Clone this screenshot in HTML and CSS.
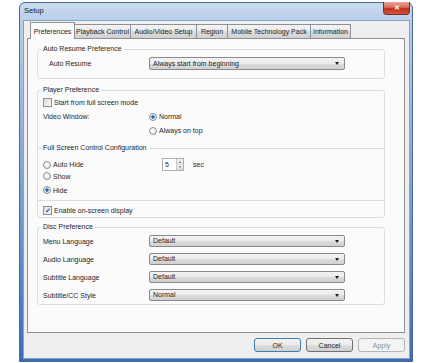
FILE: index.html
```html
<!DOCTYPE html>
<html>
<head>
    <meta charset="UTF-8">
    <title>Setup</title>
    <link rel="stylesheet" href="styles.css">
</head>
<body>
    <div class="window">
        <div class="titlebar">
            <span class="title">Setup</span>
            <span class="close-btn">&#x2715;</span>
        </div>

        <div class="client">
            <div class="tabs">
                <div class="tab active tab-prefs">Preferences</div>
                <div class="tab tab-playback">Playback Control</div>
                <div class="tab tab-av">Audio/Video Setup</div>
                <div class="tab tab-region">Region</div>
                <div class="tab tab-mobile">Mobile Technology Pack</div>
                <div class="tab tab-info">Information</div>
            </div>

            <div class="panel">
                <!-- Auto resume -->
                <fieldset class="group group-auto">
                    <legend>Auto Resume Preference</legend>
                    <div class="row">
                        <span class="label indent">Auto Resume</span>
                        <div class="select tall">Always start from beginning<span class="arrow"></span></div>
                    </div>
                </fieldset>

                <!-- Player -->
                <fieldset class="group group-player">
                    <legend>Player Preference</legend>
                    <div class="check"><span class="box"></span>Start from full screen mode</div>
                    <div class="row video-row">
                        <span class="label">Video Window:</span>
                        <div class="options">
                            <div class="radio"><span class="dot checked"></span>Normal</div>
                            <div class="radio"><span class="dot"></span>Always on top</div>
                        </div>
                    </div>

                    <fieldset class="subgroup">
                        <legend>Full Screen Control Configuration</legend>
                        <div class="row spin-row">
                            <div class="radio wide"><span class="dot"></span>Auto Hide</div>
                            <div class="spin">
                                <span class="spin-value">5</span>
                                <span class="spin-buttons">
                                    <span class="spin-up"></span>
                                    <span class="spin-down"></span>
                                </span>
                            </div>
                            <span class="unit">sec</span>
                        </div>
                        <div class="radio">
                            <span class="dot"></span>Show
                        </div>
                        <div class="radio hide-row"><span class="dot checked"></span>Hide</div>
                    </fieldset>

                    <div class="check osd"><span class="box checked">&#x2714;</span>Enable on-screen display</div>
                </fieldset>

                <!-- Disc -->
                <fieldset class="group group-disc">
                    <legend>Disc Preference</legend>
                    <div class="row">
                        <span class="label">Menu Language</span>
                        <div class="select">Default<span class="arrow"></span></div>
                    </div>
                    <div class="row">
                        <span class="label">Audio Language</span>
                        <div class="select">Default<span class="arrow"></span></div>
                    </div>
                    <div class="row">
                        <span class="label">Subtitle Language</span>
                        <div class="select">Default<span class="arrow"></span></div>
                    </div>
                    <div class="row">
                        <span class="label">Subtitle/CC Style</span>
                        <div class="select">Normal<span class="arrow"></span></div>
                    </div>
                </fieldset>
            </div>

            <div class="actions">
                <button class="btn default">OK</button>
                <button class="btn">Cancel</button>
                <button class="btn disabled">Apply</button>
            </div>
        </div>
    </div>
</body>
</html>
```

FILE: styles.css
```css
/* base */
* {
    box-sizing: border-box;
}

body {
    margin: 0;
    background: #ffffff;
    font-family: "Liberation Sans", Arial, sans-serif;
    font-size: 7px;
    color: #1e1e1e;
}

/* window frame */
.window {
    width: 394px;
    height: 360px;
    margin: 2px 0 0 19px;
    padding: 0 2px 2px 3px;
    border: 1px solid #4a6a96;
    border-radius: 6px 6px 0 0;
    background: linear-gradient(180deg, #c9dbf0 0, #b8cfea 18px, #a7c3e4 60px, #6f98cf 220px, #3a6cb6 100%);
    display: flex;
    flex-direction: column;
}

.titlebar {
    height: 17px;
    display: flex;
    align-items: flex-start;
}

.title {
    padding: 3px 0 0 1px;
    font-size: 7.5px;
    line-height: 10px;
    color: #1a1a1a;
}

.close-btn {
    margin: -1px 0 0 auto;
    width: 27px;
    height: 13px;
    border: 1px solid #7b2f24;
    border-top: none;
    border-radius: 0 0 4px 4px;
    background: linear-gradient(180deg, #e7a698 0, #d46a55 45%, #c0301c 55%, #d2553c 100%);
    color: #ffffff;
    font-size: 7px;
    font-weight: bold;
    line-height: 12px;
    text-align: center;
}

/* client area */
.client {
    flex: 1;
    border: 1px solid #8aa2c2;
    background: #efefef;
    display: flex;
    flex-direction: column;
}

/* tabs */
.tabs {
    height: 17px;
    padding-left: 6px;
    display: flex;
    align-items: flex-end;
}

.tab {
    height: 14px;
    border: 1px solid #8d9096;
    border-bottom: none;
    border-left: none;
    background: linear-gradient(180deg, #f4f4f4 0, #e9e9e9 50%, #dcdcdc 50%, #d2d2d2 100%);
    line-height: 13px;
    white-space: nowrap;
    text-align: center;
    flex-shrink: 0;
}

.tab.active {
    height: 17px;
    margin-bottom: -1px;
    border-left: 1px solid #8d9096;
    background: #fbfbfb;
    line-height: 17px;
    position: relative;
    z-index: 1;
}

.tab-prefs { width: 45px; }
.tab-playback { width: 56px; }
.tab-av { width: 66px; }
.tab-region { width: 31px; }
.tab-mobile { width: 83px; }
.tab-info { width: 40px; }

.panel {
    height: 295px;
    margin: 0 4px 0 3px;
    border: 1px solid #8d9096;
    background: #fbfbfb;
    padding-top: 5px;
}

/* group boxes */
.group {
    margin: 0 19px 0 9px;
    padding: 3px 5px 2px 5px;
    border: 1px solid #d5dfe5;
    border-radius: 3px;
    min-width: 0;
}

.group legend,
.subgroup legend {
    padding: 0 2px;
    margin-left: -2px;
    line-height: 10px;
}

.group-auto {
    padding-bottom: 8px;
}

.group-player {
    margin-top: 6px;
    padding-top: 2px;
}

.group-disc {
    margin-top: 4px;
    padding-bottom: 3px;
}

.subgroup {
    margin: 7px -5px 0 -5px;
    padding: 5px 5px 5px 5px;
    border: none;
    border-top: 1px solid #d5dfe5;
    border-bottom: 1px solid #d5dfe5;
    min-width: 0;
}

/* rows */
.row {
    display: flex;
    align-items: center;
}

.group-disc .row + .row {
    margin-top: 6px;
}

.label {
    width: 106px;
    flex-shrink: 0;
}

.label.indent {
    padding-left: 6px;
}

.video-row {
    align-items: flex-start;
    margin-top: 5px;
    line-height: 10px;
}

.options {
    display: flex;
    flex-direction: column;
    gap: 4px;
}

/* dropdown */
.select {
    width: 196px;
    height: 12px;
    padding: 0 5px 0 3px;
    border: 1px solid #8a8a8a;
    border-radius: 2px;
    background: linear-gradient(180deg, #f3f3f3 0, #ebebeb 50%, #dddddd 50%, #d0d0d0 100%);
    display: flex;
    align-items: center;
    justify-content: space-between;
    line-height: 10px;
}

.select.tall {
    height: 13px;
}

.arrow {
    width: 0;
    height: 0;
    border-left: 2.5px solid transparent;
    border-right: 2.5px solid transparent;
    border-top: 3px solid #1a1a1a;
}

/* check boxes */
.check {
    display: flex;
    align-items: center;
    height: 10px;
}

.box {
    width: 9px;
    height: 9px;
    margin-right: 2px;
    border: 1px solid #8e8f8f;
    background: linear-gradient(135deg, #dcdcdc 0, #f6f6f6 100%);
    font-size: 7px;
    line-height: 7px;
    text-align: center;
    color: #2a5db0;
}

.osd {
    margin-top: 4px;
}

/* radios */
.radio {
    display: flex;
    align-items: center;
    height: 10px;
}

.radio.wide {
    width: 119px;
    flex-shrink: 0;
}

.dot {
    width: 8px;
    height: 8px;
    margin-right: 2px;
    border: 1px solid #8e8f8f;
    border-radius: 50%;
    background: radial-gradient(circle at 40% 40%, #ffffff 0, #dedede 100%);
}

.dot.checked {
    background: radial-gradient(circle at 50% 50%, #1c5fa8 0, #2f7bc9 35%, #dfe9f3 45%, #f2f2f2 100%);
}

.hide-row {
    margin-top: 4px;
}

/* spin box */
.spin-row {
    height: 13px;
}

.spin {
    width: 22px;
    height: 13px;
    border: 1px solid #abadb3;
    background: #ffffff;
    display: flex;
}

.spin-value {
    flex: 1;
    padding-left: 2px;
    line-height: 11px;
}

.spin-buttons {
    width: 7px;
    display: flex;
    flex-direction: column;
    border-left: 1px solid #c8c8c8;
}

.spin-up,
.spin-down {
    flex: 1;
    background: linear-gradient(180deg, #f3f3f3, #dcdcdc);
    display: flex;
    align-items: center;
    justify-content: center;
}

.spin-up::after {
    content: "";
    border-left: 1.5px solid transparent;
    border-right: 1.5px solid transparent;
    border-bottom: 2px solid #4d6185;
}

.spin-down::after {
    content: "";
    border-left: 1.5px solid transparent;
    border-right: 1.5px solid transparent;
    border-top: 2px solid #4d6185;
}

.unit {
    margin-left: 9px;
}

/* buttons */
.actions {
    margin: 5px 4px 0 0;
    display: flex;
    justify-content: flex-end;
    gap: 5px;
}

.btn {
    width: 47px;
    height: 14px;
    padding: 0;
    border: 1px solid #707070;
    border-radius: 3px;
    background: linear-gradient(180deg, #f2f2f2 0, #ebebeb 50%, #dddddd 50%, #cfcfcf 100%);
    font-family: "Liberation Sans", Arial, sans-serif;
    font-size: 7px;
    color: #1e1e1e;
}

.btn.default {
    border-color: #3c7fb1;
}

.btn.disabled {
    border-color: #b5b5b5;
    background: #f4f4f4;
    color: #8d8d8d;
}
```
